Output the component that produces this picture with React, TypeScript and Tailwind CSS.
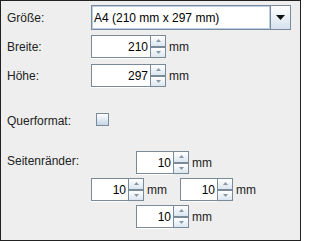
import React from "react";

// Small Metal-style spin button half
const SpinHalf = ({ up }: { up: boolean }) => (
  <div className="flex-1 flex items-center justify-center bg-gradient-to-b from-white to-[#dce6f0]">
    <svg width="5" height="3" viewBox="0 0 5 3">
      {up ? <path d="M2.5 0 L5 3 L0 3 Z" fill="#8a98a6" /> : <path d="M0 0 L5 0 L2.5 3 Z" fill="#8a98a6" />}
    </svg>
  </div>
);

interface SpinnerProps {
  value: number;
  fieldClass: string;
}

const Spinner: React.FC<SpinnerProps> = ({ value, fieldClass }) => (
  <div className="flex h-[23px]">
    <div
      className={`${fieldClass} h-full bg-white border border-[#7a8a99] border-r-0 shadow-[0_1px_0_#ffffff] flex items-center justify-end pr-[2px] text-[12px] text-black`}
    >
      {value}
    </div>
    <div className="w-[16px] h-full border border-[#7a8a99] flex flex-col">
      <SpinHalf up />
      <div className="h-[2px] bg-[#7a8a99]" />
      <SpinHalf up={false} />
    </div>
  </div>
);

const Unit = () => <span className="ml-[3px] text-[12px] text-[#222]">mm</span>;

export default function App() {
  return (
    <div
      className="w-[301px] h-[241px] bg-[#eeeeee] border border-[#222] overflow-hidden text-[#222]"
      style={{ fontFamily: '"Liberation Sans", Arial, sans-serif' }}
    >
      <div className="flex flex-col pl-[6px] pt-[4px] text-[12px]">
        {/* Größe */}
        <div className="flex items-center h-[25px]">
          <div className="w-[84px]">Größe:</div>
          <div className="flex h-[25px] w-[200px] border border-[#7a8a99]">
            <div className="flex-1 bg-white border border-[#b8cfe5] flex items-center pl-[1px] text-black">
              A4 (210 mm x 297 mm)
            </div>
            <div className="w-[20px] border-l border-[#7a8a99] bg-gradient-to-b from-white to-[#d6e2ee] flex items-center justify-center">
              <svg width="9" height="5" viewBox="0 0 9 5">
                <path d="M0 0 L9 0 L4.5 5 Z" fill="#111" />
              </svg>
            </div>
          </div>
        </div>

        {/* Breite */}
        <div className="flex items-center mt-[5px]">
          <div className="w-[84px]">Breite:</div>
          <Spinner value={210} fieldClass="w-[59px]" />
          <Unit />
        </div>

        {/* Höhe */}
        <div className="flex items-center mt-[6px]">
          <div className="w-[84px]">Höhe:</div>
          <Spinner value={297} fieldClass="w-[59px]" />
          <Unit />
        </div>

        {/* Querformat */}
        <div className="flex mt-[23px] h-[20px]">
          <div className="w-[84px] pt-[2px]">Querformat:</div>
          <div className="ml-[5px] mt-[3px] w-[13px] h-[13px] border border-[#7a8a99] bg-gradient-to-b from-white to-[#c4d6e8]" />
        </div>

        {/* Seitenränder */}
        <div className="flex items-start mt-[21px]">
          <div className="w-[84px] pt-[1px]">Seitenränder:</div>
          <div className="ml-[45px] flex items-center">
            <Spinner value={10} fieldClass="w-[37px]" />
            <Unit />
          </div>
        </div>

        <div className="flex items-center mt-[4px] pl-[84px]">
          <Spinner value={10} fieldClass="w-[37px]" />
          <Unit />
          <div className="ml-[13px] flex items-center">
            <Spinner value={10} fieldClass="w-[37px]" />
            <Unit />
          </div>
        </div>

        <div className="flex items-center mt-[4px] pl-[129px]">
          <Spinner value={10} fieldClass="w-[37px]" />
          <Unit />
        </div>
      </div>
    </div>
  );
}
